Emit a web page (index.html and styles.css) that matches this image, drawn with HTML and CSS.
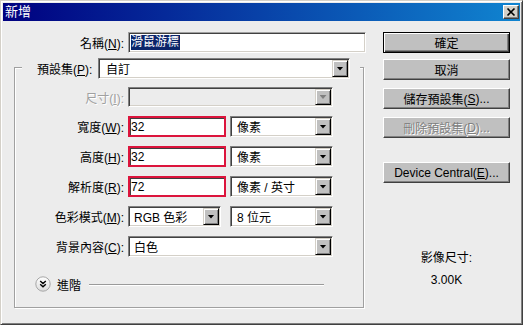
FILE: index.html
```html
<!DOCTYPE html>
<html lang="zh-Hant">
<head>
<meta charset="utf-8">
<title>新增</title>
<link rel="stylesheet" href="styles.css">
</head>
<body>
<div class="window">
  <div class="titlebar">
    <span class="title">新增</span>
    <span class="close"><svg width="14" height="12" viewBox="0 0 14 12"><path d="M3.5 2.5 L10.5 9.5 M10.5 2.5 L3.5 9.5" stroke="#000" stroke-width="1.6" fill="none"/></svg></span>
  </div>
  <div class="body">
    <div class="left">
      <div class="name-row">
        <label class="lbl name-lbl">名稱(<u>N</u>):</label>
        <div class="textbox"><span class="selected">滑鼠游標</span></div>
      </div>
      <div class="group">
        <div class="group-head">
          <label class="head-lbl">預設集(<u>P</u>):</label>
          <div class="select preset"><span class="val">自訂</span><span class="arrow"><i></i></span></div>
        </div>
        <div class="rows">
          <div class="row r-size">
            <label class="lbl disabled">尺寸(<u>I</u>):</label>
            <div class="select full is-disabled"><span class="val"></span><span class="arrow"><i></i></span></div>
          </div>
          <div class="row">
            <label class="lbl">寬度(<u>W</u>):</label>
            <div class="num">32</div>
            <div class="select unit"><span class="val">像素</span><span class="arrow"><i></i></span></div>
          </div>
          <div class="row">
            <label class="lbl">高度(<u>H</u>):</label>
            <div class="num">32</div>
            <div class="select unit"><span class="val">像素</span><span class="arrow"><i></i></span></div>
          </div>
          <div class="row">
            <label class="lbl">解析度(<u>R</u>):</label>
            <div class="num">72</div>
            <div class="select unit"><span class="val">像素 / 英寸</span><span class="arrow"><i></i></span></div>
          </div>
          <div class="row">
            <label class="lbl">色彩模式(<u>M</u>):</label>
            <div class="select mode"><span class="val">RGB 色彩</span><span class="arrow"><i></i></span></div>
            <div class="select bits"><span class="val">8 位元</span><span class="arrow"><i></i></span></div>
          </div>
          <div class="row">
            <label class="lbl">背景內容(<u>C</u>):</label>
            <div class="select full"><span class="val">白色</span><span class="arrow"><i></i></span></div>
          </div>
        </div>
        <div class="advanced">
          <svg class="adv-icon" width="16" height="16" viewBox="0 0 16 16">
            <defs><linearGradient id="g" x1="0" y1="0" x2="0" y2="1"><stop offset="0" stop-color="#ffffff"/><stop offset="1" stop-color="#dcdcdc"/></linearGradient></defs>
            <circle cx="8" cy="8" r="7.2" fill="url(#g)" stroke="#a6a6a6" stroke-width="1"/>
            <path d="M5.2 5 L8 7.6 L10.8 5 M5.2 8.2 L8 10.8 L10.8 8.2" stroke="#000" stroke-width="1.4" fill="none"/>
          </svg>
          <span class="adv-text">進階</span>
          <div class="adv-line"></div>
        </div>
      </div>
    </div>
    <div class="right">
      <button class="btn default">確定</button>
      <button class="btn b-cancel">取消</button>
      <button class="btn b-save">儲存預設集(<u>S</u>)...</button>
      <button class="btn b-del is-disabled">刪除預設集(<u>D</u>)...</button>
      <button class="btn b-device">Device Central(<u>E</u>)...</button>
      <div class="info info-label">影像尺寸:</div>
      <div class="info info-value">3.00K</div>
    </div>
  </div>
</div>
</body>
</html>
```

FILE: styles.css
```css
html, body {
  margin: 0;
  padding: 0;
  background: #ececec;
}

.window {
  width: 523px;
  height: 325px;
  box-sizing: border-box;
  border: 1px solid;
  border-color: #d4d0c8 #404040 #404040 #d4d0c8;
  box-shadow: inset 1px 1px 0 #ffffff, inset -1px -1px 0 #808080;
  padding: 2px;
  background: #ececec;
  font: 12px "Liberation Sans", "Noto Sans CJK TC", sans-serif;
  color: #000;
  display: flex;
  flex-direction: column;
  overflow: hidden;
}

.titlebar {
  height: 18px;
  flex: none;
  background: linear-gradient(to right, #000080, #1084d0);
  display: flex;
  align-items: center;
  justify-content: space-between;
  padding: 0 1px 0 2px;
  color: #fff;
}

.title {
  font-size: 13px;
  line-height: 14px;
}

.close {
  width: 16px;
  height: 14px;
  box-sizing: border-box;
  background: #d4d0c8;
  border: 1px solid;
  border-color: #ffffff #404040 #404040 #ffffff;
  box-shadow: inset -1px -1px 0 #808080;
  display: flex;
  align-items: center;
  justify-content: center;
}

.close svg {
  display: block;
}

.body {
  flex: 1;
  display: flex;
  padding: 11px 0 0 11px;
  gap: 17px;
}

.left {
  width: 352px;
  display: flex;
  flex-direction: column;
}

.lbl {
  width: 109px;
  margin-right: 4px;
  text-align: right;
  white-space: nowrap;
  flex: none;
}

.name-lbl {
  width: 110px;
}

.lbl.disabled {
  color: #a0a0a0;
  text-shadow: 1px 1px 0 #ffffff;
}

.name-row {
  display: flex;
  align-items: center;
  height: 21px;
}

.textbox {
  width: 238px;
  height: 21px;
  box-sizing: border-box;
  background: #fff;
  border: 1px solid;
  border-color: #a0a0a0 #ffffff #ffffff #a0a0a0;
  box-shadow: inset 1px 1px 0 #404040, inset -1px -1px 0 #d4d0c8;
  padding: 0 0 0 2px;
  display: flex;
  align-items: center;
}

.selected {
  background: #0a246a;
  color: #fff;
  line-height: 15px;
  padding: 0 1px 0 0;
}

.group {
  margin-top: 14px;
  width: 350px;
  box-sizing: border-box;
  border: 1px solid #a0a0a0;
  box-shadow: inset 1px 1px 0 #ffffff, 1px 1px 0 #ffffff;
  padding: 0 0 15px 0;
  display: flex;
  flex-direction: column;
}

.group-head {
  align-self: flex-start;
  margin: -10px 0 0 7px;
  background: #ececec;
  padding: 0 10px 0 15px;
  display: flex;
  align-items: center;
  height: 21px;
}

.head-lbl {
  width: 55px;
  margin-right: 6px;
  text-align: right;
  white-space: nowrap;
}

.rows {
  display: flex;
  flex-direction: column;
  gap: 9px;
  margin-top: 8px;
}

.row {
  display: flex;
  align-items: center;
  height: 21px;
}

.r-size {
  height: 20px;
}

.select {
  height: 21px;
  box-sizing: border-box;
  background: #fff;
  border: 1px solid;
  border-color: #808080 #ffffff #ffffff #808080;
  box-shadow: inset 1px 1px 0 #404040, inset -1px -1px 0 #d4d0c8;
  padding: 1px;
  display: flex;
  align-items: stretch;
  flex: none;
}

.r-size .select {
  height: 20px;
}

.select .val {
  flex: 1;
  padding-left: 4px;
  display: flex;
  align-items: center;
  white-space: nowrap;
  overflow: hidden;
}

.select .arrow {
  width: 16px;
  box-sizing: border-box;
  background: #c0c0c0;
  border: 1px solid;
  border-color: #d4d0c8 #000000 #000000 #d4d0c8;
  box-shadow: inset 1px 1px 0 #ffffff, inset -1px -1px 0 #808080;
  display: flex;
  align-items: center;
  justify-content: center;
}

.select .arrow i {
  display: block;
  width: 7px;
  height: 4px;
  background: #000;
  clip-path: polygon(0 0, 100% 0, 50% 100%);
}

.select.is-disabled {
  background: #ececec;
}

.select.is-disabled .arrow i {
  background: #808080;
}

.preset { width: 252px; }
.preset .val { padding-left: 6px; }
.full { width: 205px; }
.unit { width: 103px; margin-left: 4px; }
.unit .val { padding-left: 5px; }
.mode { width: 93px; }
.bits { width: 103px; margin-left: 9px; }
.bits .val { padding-left: 5px; }

.num {
  width: 98px;
  height: 21px;
  box-sizing: border-box;
  background: #fff;
  border: 2px solid #dc143c;
  box-shadow: inset 1px 1px 0 #404040;
  padding-left: 1px;
  display: flex;
  align-items: center;
  flex: none;
}

.advanced {
  display: flex;
  align-items: center;
  height: 16px;
  margin-top: 19px;
  padding-left: 20px;
}

.adv-icon {
  display: block;
  flex: none;
}

.adv-text {
  margin-left: 6px;
  white-space: nowrap;
  flex: none;
}

.adv-line {
  flex: 1 1 auto;
  height: 1px;
  margin: 0 39px 0 8px;
  background: #9a9a9a;
  box-shadow: 0 1px 0 #ffffff;
}

.right {
  width: 127px;
  display: flex;
  flex-direction: column;
}

.btn {
  height: 21px;
  box-sizing: border-box;
  margin: 0;
  padding: 0;
  background: #c0c0c0;
  border: 1px solid;
  border-color: #ffffff #404040 #404040 #ffffff;
  box-shadow: inset -1px -1px 0 #808080;
  font: inherit;
  color: #000;
  display: flex;
  align-items: center;
  justify-content: center;
  white-space: nowrap;
}

.btn.default {
  border: 1px solid #000;
  box-shadow: inset 1px 1px 0 #ffffff, inset -1px -1px 0 #404040, inset -2px -2px 0 #808080;
}

.b-cancel { margin-top: 6px; }
.b-save { margin-top: 8px; }
.b-del { margin-top: 8px; }
.b-device { margin-top: 24px; }

.btn.is-disabled {
  color: #808080;
  text-shadow: 1px 1px 0 #ffffff;
}

.info {
  text-align: center;
  line-height: 16px;
  height: 16px;
}

.info-label { margin-top: 67px; }
.info-value { margin-top: 6px; }
```
